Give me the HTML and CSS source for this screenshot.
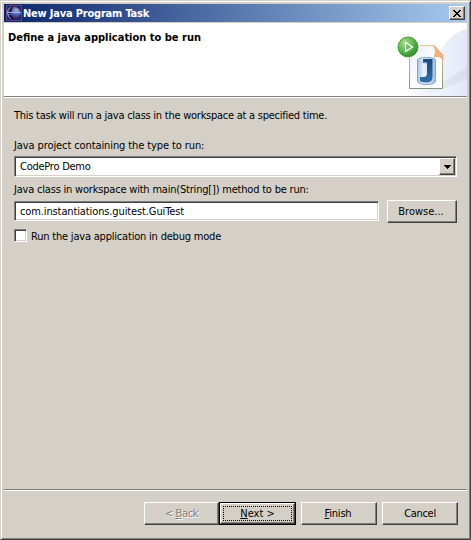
FILE: index.html
```html
<!DOCTYPE html>
<html lang="en">
<head>
<meta charset="utf-8">
<title>New Java Program Task</title>
<link rel="stylesheet" href="styles.css">
</head>
<body>
<div class="window">
  <header class="titlebar">
    <svg class="app-icon" width="16" height="16" viewBox="0 0 16 16">
      <defs>
        <radialGradient id="orb" cx=".65" cy=".3" r=".75"><stop offset="0" stop-color="#a9afd9"/><stop offset=".55" stop-color="#53559f"/><stop offset="1" stop-color="#19184b"/></radialGradient>
      </defs>
      <path fill="#57458a" d="M0 0h16v16H0z"/>
      <path fill="#30245f" d="M1 1h14v14H1z"/>
      <circle cx="8.500" cy="8" r="6" fill="url(#orb)"/>
      <path d="M5 2Q1 4 1.500 8T5 14" fill="none" stroke="#b5a5cf" stroke-width="1"/>
      <path d="M6 2Q2 8 6 14" fill="none" stroke="#171441" stroke-width="2"/>
      <path stroke="#8fbaf5" d="M2 7.500h13"/><path stroke="#4264b7" d="M3 9.500h12"/>
    </svg>
    <span class="title"><span class="t-title">New Java Program Task</span></span>
    <button class="close raised" aria-label="Close"><svg width="8" height="7" viewBox="0 0 8 7" shape-rendering="crispEdges"><path d="M0 0h2v1h1v1h2V1h1V0h2v1H7v1H6v1H5v1h1v1h1v1h1v1H6V6H5V5H3v1H2v1H0V6h1V5h1V4h1V3H2V2H1V1H0z"/></svg></button>
  </header>
  <section class="banner">
    <h1><span class="t-heading">Define a java application to be run</span></h1>
    <svg class="wizard-art" width="93" height="73" viewBox="374 23 93 73">
      <defs>
        <linearGradient id="sky" x1="0" y1="0" x2="1" y2="0"><stop offset="0" stop-color="#fff"/><stop offset="1" stop-color="#dbe3f6"/></linearGradient>
        <linearGradient id="fade" x1="0" y1="0" x2="1" y2="0"><stop offset=".2" stop-color="#d9d9e8" stop-opacity="0"/><stop offset="1" stop-color="#d5d9e9" stop-opacity=".75"/></linearGradient>
        <linearGradient id="paper" x1="0" y1="0" x2="1" y2="1"><stop offset="0" stop-color="#e6edfa"/><stop offset=".6" stop-color="#fff"/></linearGradient>
        <linearGradient id="can" x1="0" y1="0" x2="1" y2="0"><stop offset="0" stop-color="#a9c3e6"/><stop offset=".35" stop-color="#eaf2fb"/><stop offset="1" stop-color="#a5bfe2"/></linearGradient>
        <linearGradient id="jay" x1="0" y1="0" x2="0" y2="1"><stop offset="0" stop-color="#19497f"/><stop offset="1" stop-color="#2e70a6"/></linearGradient>
        <radialGradient id="green" cx=".35" cy=".3" r=".8"><stop offset="0" stop-color="#a9dc91"/><stop offset=".55" stop-color="#59b34b"/><stop offset="1" stop-color="#25842d"/></radialGradient>
        <linearGradient id="frame" x1="0" y1="0" x2="0" y2="1"><stop offset="0" stop-color="#e2c894"/><stop offset="1" stop-color="#7f967a"/></linearGradient>
      </defs>
      <path fill="url(#sky)" d="M400 96Q415 82 440 73V52Q450 33 467 29V96z" opacity=".8"/>
      <path fill="url(#fade)" d="M405 94Q442 88 467 66V78Q447 89 420 96z"/>
      <path d="M409.500 45.500H434L442.500 55V88.500H409.500z" fill="url(#paper)" stroke="url(#frame)"/>
      <path d="M434 45.500L443 55V60Q440 55 434 57Q437 52 434 45.500z" fill="#efb47d" stroke="#e0a269" stroke-width=".7"/>
      <path d="M417.500 60V81Q418 84.500 426.500 84.500T435.500 81V60Q435 57.500 426.500 57.500T417.500 60z" fill="url(#can)" stroke="#7fa3d2"/>
      <path d="M418 61Q426 65.500 435 61" fill="none" stroke="#a7c2e5"/>
      <path d="M423 59h9.500v18q0 5-5.500 5.500-4 .3-7-1.500v-4h3.500q3.500 0 3.500-3V62.500h-4z" fill="url(#jay)"/>
      <circle cx="408" cy="47" r="11.300" fill="#fffde0" opacity=".9"/>
      <circle cx="408" cy="47" r="10" fill="url(#green)" stroke="#459b43"/>
      <path d="M405.500 42.500v9l7-4.500z" fill="#74bd63" stroke="#f8fff2" stroke-width="1.300"/>
    </svg>
  </section>
  <main class="content">
    <p class="line intro"><span class="t-intro">This task will run a java class in the workspace at a specified time.</span></p>
    <label class="line project-label"><span class="t-project">Java project containing the type to run:</span></label>
    <div class="field combo sunken"><span class="t-demo">CodePro Demo</span>
      <span class="arrow raised"><svg width="7" height="4" viewBox="0 0 7 4" shape-rendering="crispEdges"><path d="M0 0h7v1H6v1H5v1H4v1H3V3H2V2H1V1H0z"/></svg></span>
    </div>
    <label class="line class-label"><span class="t-class">Java class in workspace with main(String[]) method to be run:</span></label>
    <div class="class-row">
      <div class="field input sunken"><span class="t-value">com.instantiations.guitest.GuiTest</span></div>
      <button class="button browse raised"><span class="t-browse">Browse...</span></button>
    </div>
    <label class="check"><span class="box sunken"></span><span class="t-debug">Run the java application in debug mode</span></label>
  </main>
  <footer class="actions">
    <button class="button back raised"><span>&lt; <u>B</u>ack</span></button>
    <button class="next"><span class="button raised"><span class="focus"><span><u>N</u>ext &gt;</span></span></span></button>
    <button class="button finish raised"><span><u>F</u>inish</span></button>
    <button class="button cancel raised"><span>Cancel</span></button>
  </footer>
</div>
</body>
</html>
```
FILE: styles.css
```css
* { box-sizing: border-box; }
body { margin: 0; }
.window {
  width: 471px; height: 540px; padding: 2px 1px 0 2px;
  background: #d4d0c8; border: 1px solid; border-color: #d4d0c8 #404040 #404040 #d4d0c8;
  box-shadow: inset 1px 1px #fff, inset -1px -1px #808080;
  font: 11px/14px "DejaVu Sans Condensed", "DejaVu Sans", sans-serif;
  font-stretch: condensed; color: #000;
  display: flex; flex-direction: column; overflow: hidden;
}
button { font: inherit; color: inherit; padding: 0; margin: 0; border: 0; border-radius: 0; background: #d4d0c8; }
span { white-space: nowrap; }
.raised { background: #d4d0c8; border: 1px solid; border-color: #fff #404040 #404040 #fff; box-shadow: inset -1px -1px #808080; }
.sunken { background: #fff; border: 1px solid; border-color: #808080 #fff #fff #808080; box-shadow: inset 1px 1px #404040, inset -1px -1px #d4d0c8; }
.titlebar { width: 463px; height: 18px; margin: 1px 0 0 1px; display: flex; align-items: center; background: linear-gradient(90deg, #0a246a, #a6caf0); padding: 0 2px; flex: none; }
.app-icon { flex: none; }
.title { flex: 1; padding: 1px 0 0 1px; color: #fff; font-weight: bold; letter-spacing: -.2px; }
.close { width: 16px; height: 14px; display: flex; align-items: center; justify-content: center; flex: none; }
.banner { width: 463px; height: 75px; margin: 1px 0 0 1px; background: #fff; border-bottom: 1px solid #fff; box-shadow: inset 0 -1px #808080; display: flex; justify-content: space-between; flex: none; }
h1 { font: inherit; font-weight: bold; margin: 8px 0 0 4px; }
.wizard-art { flex: none; }
.content { padding: 11px 12px 0 11px; height: 391px; flex: none; display: flex; flex-direction: column; }
.line { display: block; margin: 0; height: 14px; }
.project-label { margin-top: 16px; }
.field { height: 21px; display: flex; align-items: center; padding-left: 5px; }
.combo { margin-top: 3px; justify-content: space-between; padding-right: 1px; }
.arrow { width: 16px; height: 17px; display: flex; align-items: center; justify-content: center; }
.class-label { margin-top: 6px; }
.class-row { margin-top: 3px; display: flex; justify-content: space-between; align-items: flex-start; height: 23px; }
.input { width: 365px; height: 20px; margin-top: 1px; padding-top: 2px; }
.button { display: flex; align-items: center; justify-content: center; height: 23px; }
.browse { width: 70px; padding-right: 2px; }
.check { display: flex; align-items: flex-start; gap: 4px; margin-top: 6px; height: 14px; }
.box { width: 13px; height: 13px; }
.t-intro { letter-spacing: -.25px; }
.t-project { letter-spacing: -.1px; }
.t-demo { letter-spacing: -.25px; }
.t-class { letter-spacing: -.2px; }
.t-value { letter-spacing: -.12px; }
.t-debug { letter-spacing: -.2px; padding-top: 1px; }
.actions { width: 463px; height: 48px; margin-left: 1px; border-top: 1px solid #808080; box-shadow: inset 0 1px #fff; display: flex; padding: 12px 0 0 140px; flex: none; }
.actions .button { flex: none; }
.back { width: 75px; color: #808080; text-shadow: 1px 1px #fff; letter-spacing: -.4px; }
.next { width: 77px; height: 23px; border: 1px solid #000; margin-right: 5px; display: block; flex: none; }
.next .button { height: 21px; }
.focus { width: 69px; height: 15px; border: 1px dotted #000; display: flex; align-items: center; justify-content: center; }
.finish { width: 76px; margin-right: 5px; letter-spacing: -.2px; padding-right: 2px; }
.cancel { width: 76px; letter-spacing: -.3px; }
u { text-underline-offset: 1px; }
```
